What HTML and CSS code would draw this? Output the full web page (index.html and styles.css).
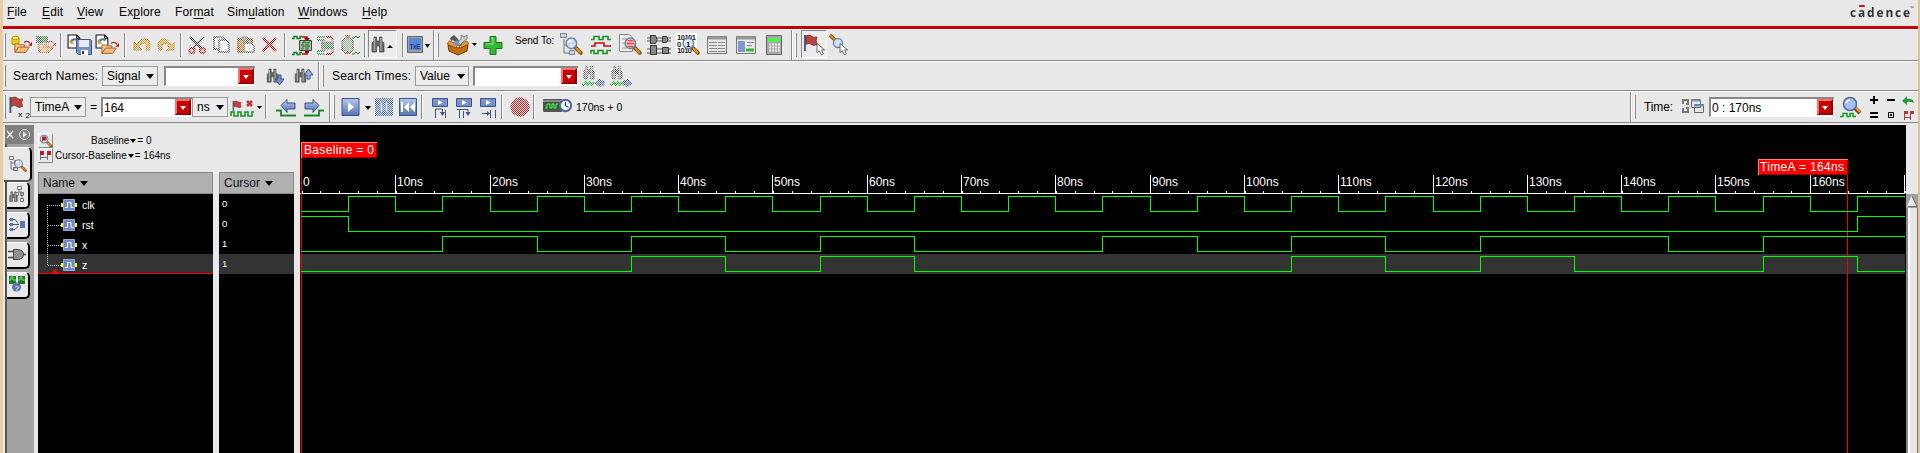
FILE: index.html
```html
<!DOCTYPE html>
<html lang="en">
<head>
<meta charset="utf-8">
<title>Waveform - SimVision</title>
<link rel="stylesheet" href="styles.css">
</head>
<body>
<svg class="defs" width="0" height="0" aria-hidden="true">
  <defs>
    <pattern id="chk" width="2" height="2" patternUnits="userSpaceOnUse"><path d="M0 0h1v1h-1zM1 1h1v1h-1z" fill="#fff"/></pattern>
    <mask id="dis" maskUnits="userSpaceOnUse" x="0" y="0" width="1920" height="130"><rect width="1920" height="130" fill="url(#chk)"/></mask>
    <linearGradient id="blue" x2="0" y2="1"><stop stop-color="#b4c6ea"/><stop offset="1" stop-color="#5874b4"/></linearGradient>
    <linearGradient id="metal"><stop stop-color="#444"/><stop offset=".4" stop-color="#aaa"/><stop offset="1" stop-color="#333"/></linearGradient>
  </defs>
  <symbol id="folder" viewBox="0 0 20 14" overflow="visible">
    <path d="M1 12V3h4l1 1h6v3" fill="#f6c897" stroke="#a85a18"/><path d="M1 12.5L5 6.5H17L13 12.5Z" fill="#f7b878" stroke="#a85a18"/>
    <path d="M11 1.5q4-3 7 1" fill="none" stroke="#b03030" stroke-width="1.4"/><path d="M20 1v4h-4z" fill="#a01818"/>
  </symbol>
  <symbol id="page" viewBox="0 0 14 14" overflow="visible">
    <path d="M1 1h8l3 3v9h-11z" fill="#fff" stroke="#111"/><path d="M9 1v3h3" fill="none" stroke="#111"/><path d="M3 8q3-5 7-2" fill="none" stroke="#5876a8" stroke-width="2"/><path d="M3 5v4h4z" fill="#d0a020"/>
  </symbol>
  <symbol id="bino" viewBox="0 0 14 16" overflow="visible">
    <path d="M3 0h2.500v4h3V0h2.500v4l2 2v9H8.500V9h-3v6H1V6l2-2z" fill="#666" stroke="#444" stroke-width=".7"/><path d="M3.500 1v13M10 1v13" stroke="#aaa" stroke-width="1.300" fill="none"/>
  </symbol>
  <symbol id="lens" viewBox="0 0 17 17" overflow="visible">
    <path d="M10 10l5 5" stroke="#7a4a08" stroke-width="3.600" stroke-linecap="round"/><path d="M10.500 10.500l4.500 4.500" stroke="#e09a28" stroke-width="2"/>
    <circle cx="6" cy="6" r="5" fill="#d6e2f4" fill-opacity=".8" stroke="#7088a8" stroke-width="1.400"/><path d="M3 5q1-2 3-2" stroke="#fff" fill="none" stroke-width="1.500"/>
  </symbol>
  <symbol id="flag" viewBox="0 0 16 18" overflow="visible">
    <path d="M1 0v17" stroke="#42588c" stroke-width="2"/><path d="M2 1q4-2 6 0t6 1l-1 4 1 4q-4 2-6 0t-6 0z" fill="#b84440" stroke="#802020" stroke-width=".7"/>
  </symbol>
  <symbol id="arrow" viewBox="0 0 10 12" overflow="visible"><path d="M0 0v10l2.500-2 2.500 4.500 2-1-2-4.500h3.500z" fill="#fff" stroke="#333" stroke-width=".8"/></symbol>
  <symbol id="step" viewBox="0 0 16 9" overflow="visible"><path d="M.5.5h15v8h-15z" fill="#7890cc" stroke="#3c5488"/><path d="M6 2l5 2.500-5 2.500z" fill="#fff"/></symbol>
  <symbol id="node" viewBox="0 0 16 12" overflow="visible"><path d="M0 4h16v4h-16z" fill="#ff0"/><path d="M2.500.5h11v11h-11z" fill="#7088c4" stroke="#98acd8"/><path d="M4 8.500h2.500v-5h3.500v5h2.500" fill="none" stroke="#fff"/></symbol>
  <symbol id="chip" viewBox="0 0 24 20" overflow="visible"><g stroke="#555" fill="none"><path d="M0 3h24M0 6h24M0 14h24M0 18h24"/><g fill="#888" stroke="#333"><path d="M3.500.5h5q3 4 0 8h-5zM15.500 1.500h4q3 3 0 6h-4zM3.500 10.500h6v9h-6zM15.500 12.500h6v6h-6z"/></g></g></symbol>
</svg>

<div class="window">
  <header class="menubar">
    <nav class="menu">
      <span class="file"><u>F</u>ile</span><span class="edit"><u>E</u>dit</span><span class="view"><u>V</u>iew</span><span class="explore">Ex<u>p</u>lore</span><span class="format">For<u>m</u>at</span><span class="sim">Sim<u>u</u>lation</span><span class="windows"><u>W</u>indows</span><span class="help"><u>H</u>elp</span>
    </nav>
    <div class="brand">c<span class="macron">a</span>dence<sup>™</sup></div>
  </header>

  <section class="bar bar-main">
    <i class="grip"></i>
    <svg width="52" height="31" viewBox="8 29 52 31">
      <path d="M12 38v6q4 2 7 0v-6" fill="#f2d010" stroke="#b09000"/><ellipse cx="15.500" cy="38" rx="3.500" ry="1.700" fill="#ffef50" stroke="#b09000"/>
      <use href="#folder" x="14" y="41" width="18" height="13"/>
      <g mask="url(#dis)"><path d="M36 36h12v7h-12z" fill="#487848"/><path d="M37 39h10" stroke="#28b030"/><use href="#folder" x="38" y="41" width="18" height="13"/></g>
    </svg>
    <i class="sep"></i>
    <svg width="62" height="31" viewBox="62 29 62 31">
      <use href="#page" x="67" y="34" width="15" height="15"/><path d="M76.500 39.500h14l1 1v14h-13l-2-2z" fill="#7890c8" stroke="#3c5488"/><path d="M79 40h10v7h-10z" fill="#e8eef8"/><path d="M81 50h7v5h-7z" fill="#fff"/><path d="M82 51h2v3h-2z" fill="#334"/>
      <use href="#page" x="95" y="34" width="15" height="15"/><use href="#folder" x="101" y="42" width="18" height="13"/>
    </svg>
    <i class="sep"></i>
    <svg width="54" height="31" viewBox="126 29 54 31"><g mask="url(#dis)" fill="#f0a010" stroke="#a86000">
      <path d="M134 42v8h8l-3-3q2-5 5-4 3 1 2 7h3q3-9-3-11-6-1-9 6z"/><path d="M174 42v8h-8l3-3q-2-5-5-4-3 1-2 7h-3q-3-9 3-11 6-1 9 6z"/></g></svg>
    <i class="sep"></i>
    <svg width="102" height="31" viewBox="182 29 102 31"><g mask="url(#dis)" fill="none">
      <path d="M190 37l12 12M204 37l-12 12" stroke="#222" stroke-width="2"/><circle cx="192" cy="50.500" r="2.600" stroke="#d00" stroke-width="2"/><circle cx="202.500" cy="50.500" r="2.600" stroke="#d00" stroke-width="2"/>
      <g stroke="#444" fill="#fff" stroke-width="1.500"><path d="M214 37h8l3 3v9h-11z"/><path d="M219 40h7l3 3v9h-10z"/></g>
      <path d="M238 39h14v13h-14z" fill="#d88018" stroke="#804000" stroke-width="1.500"/><path d="M242 37h6v4h-6z" fill="#888" stroke="#555"/><path d="M244 43h7l3 3v6h-10z" fill="#fff" stroke="#555" stroke-width="1.500"/>
      <path d="M263 38l13 13M276 38l-13 13" stroke="#b81010" stroke-width="3.500"/></g></svg>
    <i class="sep"></i>
    <svg width="78" height="31" viewBox="286 29 78 31" fill="none">
      <path d="M292 38.500h2v-2h3v2h3v-2h2" stroke="#107818" stroke-width="1.300"/><path d="M292 54.500h2v-2h3v2h3v-2h2" stroke="#107818" stroke-width="1.300"/>
      <path d="M302 37h5v2M302 54h5v-3" stroke="#b00000" stroke-width="1.500"/><path d="M304 38h6l-3 4zM305 49h4v4h-4z" fill="#b00000"/>
      <path d="M299.500 40.500h12v10h-12z" fill="#b0b8b0" stroke="#444"/><path d="M301 45h2v-3h3v3h2v-3h2M301 49h2v-3h3v3h2v-3h2" stroke="#108018"/>
      <g mask="url(#dis)"><path d="M317 37h8M317 40h8M317 51h8M317 54h8" stroke="#107818" stroke-width="1.500"/><path d="M321 41.500h13v8h-13z" fill="#666"/><path d="M323 44h9v3h-9z" fill="#20a028"/><path d="M326 37h5l2 3M326 54h5l2-3" stroke="#b00000" stroke-width="2"/>
      <path d="M342 40l3-2h5l3 2v11l-3 2h-6l-2-2z" fill="#90b090" stroke="#444"/><path d="M345 35h5l-2.500 3zM345 54h5l-2.500-3z" fill="#d00000"/></g>
      <path d="M352 38h2l2-2 2 2 2-2M352 54h2l2-2 2 2 2-2" stroke="#107818"/>
    </svg>
    <i class="sep"></i>
    <div class="toggle find"><svg width="27" height="26" viewBox="369 31 27 26"><use href="#bino" x="371" y="37" width="14" height="16"/><path d="M387 48l3-3 3 3z"/></svg></div>
    <i class="sep after-find"></i>
    <svg width="29" height="31" viewBox="404 29 29 31"><path d="M407.500 36.500h15v16h-15z" fill="#a0a0a0" stroke="#666"/><path d="M409 38h12v12h-12z" fill="#5888dc"/><text x="409.500" y="49" font-size="6.500" textLength="11" fill="#102040">TxE</text><path d="M425 44h5l-2.500 4z"/></svg>
    <i class="edge"></i><i class="grip"></i>
    <svg width="69" height="31" viewBox="442 29 69 31">
      <path d="M448 45l10 3 10-3-1 6-9 4-9-4z" fill="#c06c10" stroke="#713d06"/><path d="M447 44l2-3 9 3-2 4zM458 44l9-3 2 3-9 4z" fill="#e09838" stroke="#8a4a08" stroke-width=".7"/><path d="M450 38l4-3 3 3 5 7-2 1-7-6-2 1z" fill="#555"/><path d="M455 44l6-5v-4l3 2 3-2v4l-3 2-4 4z" fill="#ccc" stroke="#666" stroke-width=".7"/><path d="M453 43l4-3 3 4-3 2z" fill="#7890c8"/>
      <path d="M472 43h5l-2.500 3z"/><path d="M490 36.500h6v6h6v6h-6v6h-6v-6h-6v-6h6z" fill="#38b838" stroke="#157815"/><path d="M491 38h2v6h-7" stroke="#98e898" fill="none"/>
    </svg>
    <span class="send">Send To:</span>
    <svg width="236" height="31" viewBox="555 29 236 31" fill="none">
      <path d="M564 39v14h6M564 45h6" stroke="#777"/><path d="M560.500 33.500h6v4h-6zM568.500 38.500h6v5h-6zM569.500 50.500h5v4h-5z" fill="#ccd4e0" stroke="#70809c"/><use href="#lens" x="565" y="37" width="18" height="18"/>
      <path d="M591 39.500h3v-3h5v3h4v-3h5v3h3M591 53.500v-3h3v3h4v-3h5v3h4v-3h4" stroke="#1a9020" stroke-width="1.600"/><path d="M591 46h4v-3h9v3h7" stroke="#c01010" stroke-width="1.600"/>
      <path d="M619.500 34.500h10l3 3v14h-13z" fill="#eee" stroke="#888"/><path d="M622 39h7M622 43h4M622 48h5" stroke="#999"/><use href="#lens" x="624" y="37" width="18" height="18"/><circle cx="630.500" cy="43.500" r="4" fill="#e04848"/><path d="M627 42h7M627 45h7" stroke="#fff"/>
      <use href="#chip" x="647" y="35" width="24" height="20"/>
      <path d="M676 33h21v20h-21z" fill="#fff"/><g class="bits"><text x="677" y="40" textLength="19">10101</text><text x="677" y="46.500">0</text><text x="677" y="53" textLength="15">1010</text></g><use href="#lens" x="682" y="37" width="18" height="18"/><text x="686" y="47" font-size="8" font-weight="bold" fill="#111">1</text>
      <g fill="#e8e8e8" stroke="#777"><path d="M707.500 36.500h19v17h-19z"/><path d="M736.500 36.500h19v17h-19z"/></g><path d="M708 38h18M737 38h18" stroke="#999" stroke-width="3"/><path d="M709 42.500h8M718 42.500h7M709 45.500h8M718 45.500h7M709 48.500h8M718 48.500h7M709 51.500h8M718 51.500h7" stroke="#888"/><path d="M738 41h7v11h-7z" fill="#8098d0"/><path d="M747 42.500h7M747 45.500h5" stroke="#888"/><path d="M746 48.500h8v3h-8z" fill="#38b830"/>
      <path d="M766.500 35.500h15v19h-15z" fill="#a8a8a8" stroke="#666"/><path d="M768 38h12v4h-12z" fill="#50f050"/><path d="M769 44.500h11M769 47.500h11M769 50.500h11" stroke="#eee" stroke-width="2" stroke-dasharray="2 1"/>
    </svg>
    <i class="edge"></i><i class="grip"></i>
    <div class="toggle pick"><svg width="24" height="26" viewBox="802 31 24 26"><use href="#flag" x="804" y="35" width="15" height="17"/><use href="#arrow" x="817" y="43" width="9" height="12"/></svg></div>
    <svg width="24" height="31" viewBox="827 29 24 31"><path d="M830 35l6 6" stroke="#7a4a08" stroke-width="3.500"/><path d="M830 35l6 6" stroke="#d88a18" stroke-width="2"/><circle cx="838" cy="43" r="4.500" fill="#d6e2f4" stroke="#7088a8" stroke-width="1.400"/><use href="#arrow" x="840" y="43" width="9" height="12"/></svg>
  </section>

  <section class="bar bar-search">
    <i class="grip"></i>
    <label class="names">Search Names:</label>
    <div class="select signal">Signal<b class="caret"></b></div>
    <div class="field f-names"><input aria-label="Search names"><button aria-label="List"></button></div>
    <svg width="63" height="28" viewBox="255 62 63 28"><use href="#bino" x="266" y="69" width="13" height="14"/><path d="M278 75h3v4h3l-4.500 6-4.500-6h3z" fill="#7890cc" stroke="#3c5488"/><use href="#bino" x="294" y="69" width="13" height="14"/><path d="M307 79v-4h-3l4.500-6 4.500 6h-3v4z" fill="#98b0e0" stroke="#3c5488"/></svg>
    <i class="edge"></i><i class="grip"></i>
    <label class="times">Search Times:</label>
    <div class="select value">Value<b class="caret"></b></div>
    <div class="field f-times"><input aria-label="Search times"><button aria-label="List"></button></div>
    <svg width="60" height="28" viewBox="578 62 60 28"><g mask="url(#dis)" fill="none"><use href="#bino" x="583" y="66" width="12" height="14"/><use href="#bino" x="611" y="66" width="12" height="14"/><path d="M582 85h2l2-3 2 3 2-3 2 3 2-3M610 85h2l2-3 2 3 2-3 2 3 2-3" stroke="#00a010" stroke-width="2"/><path d="M595 83l5-4v2h4v4h-4v2zM632 83l-5-4v2h-4v4h4v2z" fill="#4868b8" stroke="#385090"/></g></svg>
  </section>

  <section class="bar bar-time">
    <i class="grip"></i>
    <svg width="22" height="30" viewBox="8 92 22 30"><use href="#flag" x="9" y="97" width="16" height="17"/><text x="18" y="117" font-size="8" font-weight="bold" fill="#345">x</text><text x="25.500" y="118" font-size="8">2</text></svg>
    <div class="select timea">TimeA<b class="caret"></b></div>
    <span class="eq">=</span>
    <div class="field f-time"><input aria-label="Cursor time" value="164"><button aria-label="List"></button></div>
    <div class="select unit">ns<b class="caret"></b></div>
    <svg width="37" height="30" viewBox="228 92 37 30"><use href="#flag" x="232" y="101" width="11" height="11"/><path d="M247 101l5 5M252 101l-5 5" stroke="#c03838" stroke-width="2.500"/><path d="M231 116v-4h3v4h4v-4h3v4h4v-4h3v4h4v-4h2" fill="none" stroke="#189828" stroke-width="1.600"/><path d="M257 106h5l-2.500 3z"/></svg>
    <i class="sep"></i>
    <svg width="62" height="30" viewBox="267 92 62 30"><path d="M276 110.500h5v5h15M304 115.500h15v-5h5" fill="none" stroke="#188828" stroke-width="1.800"/><path d="M281 105.500l6-6v3.500h8v6h-8v3.500zM319 105.500l-6-6v3.500h-8v6h8v3.500z" fill="url(#blue)" stroke="#3c5488"/></svg>
    <i class="edge"></i><i class="grip"></i>
    <svg width="83" height="30" viewBox="338 92 83 30"><path d="M342 98.500h17v17h-17z" fill="url(#blue)" stroke="#3c5488"/><path d="M348 102l6 5-6 5z" fill="#fff"/><path d="M365 106h6l-3 4z"/><g mask="url(#dis)"><path d="M375 98h18v18h-18z" fill="#5070b0"/></g><path d="M380.500 102v10h2v-10zM385.500 102v10h2v-10z" fill="#e4eaf6" stroke="#92a6d2" stroke-width=".6"/><path d="M399.500 98.500h17v17h-17z" fill="url(#blue)" stroke="#3c5488"/><path d="M401 102h2v10h-2zM409 102v10l-5-5zM415 102v10l-5-5z" fill="#fff"/></svg>
    <i class="sep"></i>
    <svg width="78" height="30" viewBox="423 92 78 30" fill="none" stroke="#3c5488"><g stroke="none"><use href="#step" x="432" y="98" width="16" height="9"/><use href="#step" x="456" y="98" width="16" height="9"/><use href="#step" x="480" y="98" width="16" height="9"/></g><path d="M435.500 118v-9h7v5M445.500 110v8M459.500 118v-9M463.500 118v-7M457 109.500h11v4M482 113.500h7M490.500 110v8M495.500 110v8"/><path d="M440 112h5l-2.500 4zM465.500 112h5l-2.500 4zM487 111v5l3-2.500z" fill="#3c5488" stroke="none"/></svg>
    <i class="sep"></i>
    <svg width="30" height="30" viewBox="503 92 30 30"><g mask="url(#dis)"><circle cx="520" cy="107" r="9.200" fill="#d02020" stroke="#802020"/></g></svg>
    <i class="sep"></i>
    <svg width="40" height="30" viewBox="535 92 40 30"><path d="M543.500 99.500h18v12h-18z" fill="#485848" stroke="#555"/><path d="M543 100h19v2h-19z" fill="#888"/><path d="M545 108h2v-4h3v4h2v-4h2v4h2v-4h2" fill="none" stroke="#40ff40"/><circle cx="565.500" cy="105.500" r="5.700" fill="#eef2fa" stroke="#506898" stroke-width="2"/><path d="M565.500 102v4l3 1" fill="none" stroke="#334"/></svg>
    <span class="status">170ns + 0</span>
    <i class="edge"></i><i class="grip"></i>
    <label class="time">Time:</label>
    <svg width="33" height="30" viewBox="1676 92 33 30" fill="none"><path d="M1683 104v-4h5v4h-2M1683 108v4h5v-4h-2" stroke="#777" stroke-width="2"/><path d="M1691.500 99.500h9v8h-9zM1694.500 104.500h9v8h-9z" fill="#e8e8e8" stroke="#666"/><path d="M1691 100.500h10M1694 105.500h10" stroke="#7890b8" stroke-width="2"/></svg>
    <div class="field f-range"><input aria-label="Time range" value="0 : 170ns"><button aria-label="List"></button></div>
    <svg width="84" height="30" viewBox="1834 92 84 30" fill="none"><path d="M1854 107l6 6" stroke="#7a4a08" stroke-width="4"/><path d="M1855 107l5 5" stroke="#e0a030" stroke-width="2"/><circle cx="1850" cy="104" r="6.500" fill="#a8c0f0" stroke="#4c68a0" stroke-width="1.500"/><path d="M1846 103q1-3 4-3" stroke="#fff" stroke-width="1.500"/><path d="M1840 116.500h3v-3h4v3h3v-3h3v3h3" stroke="#189828" stroke-width="1.500"/>
      <path d="M1870 100h8M1874 96v8M1887 100h8M1870 113h8M1870 117h8" stroke="#000" stroke-width="2"/><path d="M1888.500 112.500h5v5h-5z" stroke="#000"/><path d="M1890 114h2v2h-2z" fill="#000"/><path d="M1902 101l5-5v3q6-1 7 4-4-2-7-1v3z" fill="#289838"/><path d="M1904.500 120v-9M1904 117.500h7M1910.500 120v-9" stroke="#b03840"/><path d="M1904 111h4v3h-4zM1910 111h4v3h-4z" fill="#b83840"/></svg>
  </section>

  <main class="content">
    <aside class="rail">
      <svg class="rail-head" width="29" height="19" viewBox="5 125 29 19" fill="none"><path d="M7 131l6 7M13 131l-6 7" stroke="#eee" stroke-width="1.300"/><circle cx="24.500" cy="134.500" r="5" stroke="#eee"/><path d="M23 131.500l4 3-4 3z" fill="#eee"/></svg>
      <div class="tab active"><svg width="24" height="32" viewBox="7 148 24 32" fill="none"><path d="M11 161v8h4M11 163h4" stroke="#777"/><path d="M9.500 156.500h4v3h-4zM14.500 160.500h5v4h-5zM13.500 167.500h4v3h-4z" stroke="#777"/><use href="#lens" x="14" y="159" width="13" height="13"/></svg></div>
      <div class="tab"><svg width="22" height="24" viewBox="7 183 22 24" fill="none"><path d="M17.500 186.500h4v3h-4zM15.500 192.500h3v3h-3zM20.500 192.500h3v3h-3zM20.500 198.500h3v3h-3z" stroke="#777"/><path d="M19 190v2h3v7" stroke="#777"/><use href="#bino" x="9" y="191" width="9" height="12"/></svg></div>
      <div class="tab"><svg width="22" height="24" viewBox="7 212 22 24" fill="none"><path d="M9 218.500h6l3 4M9 223.500h10M9 228.500h6l3-3" stroke="#3c5488"/><path d="M10 217h3v3h-3zM10 222h3v3h-3zM10 227h3v3h-3zM20 220h5v7h-5z" fill="#5874b4"/></svg></div>
      <div class="tab"><svg width="22" height="24" viewBox="7 242 22 24" fill="none"><path d="M8 250.500h6M8 256.500h6M22 253.500h4" stroke="#444" stroke-width="1.500"/><path d="M13.500 248.500h5q5 1 5 5t-5 5h-5z" fill="#909090" stroke="#444"/></svg></div>
      <div class="tab"><svg width="22" height="24" viewBox="7 272 22 24" fill="none"><path d="M9 275h7v8h-7zM18 275h7v8h-7z" fill="#287030"/><path d="M9 279h2v-3h2v3h3M18 279h2v-3h2v3h3" stroke="#50ff50"/><circle cx="16.500" cy="286" r="4.500" fill="#5874b4"/><text x="14.500" y="289.500" font-size="8" fill="#fff">?</text></svg></div>
    </aside>

    <section class="signals">
      <div class="baseinfo">
        <div class="info-row"><svg width="15" height="15" viewBox="0 0 15 15"><path d="M.5 14.500v-14h14" fill="none" stroke="#fff"/><path d="M14.500.5v14h-14" fill="none" stroke="#888"/><use href="#lens" x="1.500" y="1.500" width="13" height="13"/><path d="M4.500 3.500v5M5 4h3v3h-3z" stroke="#b02020" fill="#b02020"/></svg><span class="info-a">Baseline<b class="caret sm"></b>= 0</span></div>
        <div class="info-row"><svg width="15" height="15" viewBox="0 0 15 15"><path d="M.5 14.500v-14h14" fill="none" stroke="#fff"/><path d="M14.500.5v14h-14" fill="none" stroke="#888"/><path d="M2.500 12v-9M9.500 12v-9M2 9.500h8" stroke="#777"/><path d="M2 3h4v4h-4zM9 3h4v4h-4z" fill="#b02020"/></svg><span class="info-b">Cursor-Baseline<b class="caret sm"></b>= 164ns</span></div>
      </div>
      <div class="columns">
        <div class="col names-col">
          <div class="col-head">Name<b class="caret"></b></div>
          <div class="row"><svg width="40" height="20" viewBox="0 0 40 20"><path d="M9.500 20v-8.500h14" class="tree"/><use href="#node" x="23" y="5" width="16" height="12"/></svg>clk</div>
          <div class="row"><svg width="40" height="20" viewBox="0 0 40 20"><path d="M9.500 0v20M9.500 11.500h14" class="tree"/><use href="#node" x="23" y="5" width="16" height="12"/></svg>rst</div>
          <div class="row"><svg width="40" height="20" viewBox="0 0 40 20"><path d="M9.500 0v20M9.500 11.500h14" class="tree"/><use href="#node" x="23" y="5" width="16" height="12"/></svg>x</div>
          <div class="row selected insert"><svg width="40" height="20" viewBox="0 0 40 20"><path d="M9.500 0v11.500h14" class="tree"/><use href="#node" x="23" y="5" width="16" height="12"/><path d="M13 20l4-5 4 5z" fill="red"/></svg>z</div>
        </div>
        <div class="col cursor-col">
          <div class="col-head">Cursor<b class="caret"></b></div>
          <div class="row">0</div><div class="row">0</div><div class="row">1</div><div class="row selected">1</div>
        </div>
      </div>
    </section>

    <svg class="waves" width="1606" height="328" viewBox="0 0 1606 328" fill="none" shape-rendering="crispEdges">
      <path d="M0 129h1605v20h-1605z" fill="#333"/>
      <g stroke="#fff"><path d="M0 68.500h1605"/><path d="M1.500 67h1604" stroke-width="2" stroke-dasharray="1 17.860"/>
      <path d="M95.500 50v18M190.500 50v18M284.500 50v18M378.500 50v18M472.500 50v18M567.500 50v18M661.500 50v18M755.500 50v18M850.500 50v18M944.500 50v18M1038.500 50v18M1133.500 50v18M1227.500 50v18M1321.500 50v18M1415.500 50v18M1510.500 50v18M1604.500 50v18"/></g>
      <g class="axis"><text x="3" y="61">0</text><text x="97" y="61">10ns</text><text x="192" y="61">20ns</text><text x="286" y="61">30ns</text><text x="380" y="61">40ns</text><text x="474" y="61">50ns</text><text x="569" y="61">60ns</text><text x="663" y="61">70ns</text><text x="757" y="61">80ns</text><text x="852" y="61">90ns</text><text x="946" y="61">100ns</text><text x="1040" y="61">110ns</text><text x="1135" y="61">120ns</text><text x="1229" y="61">130ns</text><text x="1323" y="61">140ns</text><text x="1417" y="61">150ns</text><text x="1512" y="61">160ns</text></g>
      <path d="M1.500 17v311M1547.500 49v279" stroke="#f00000"/>
      <g stroke="#0f0">
        <path d="M1 86.500H48.500V71.500H95.500V86.500H142.500V71.500H190.500V86.500H237.500V71.500H284.500V86.500H331.500V71.500H378.500V86.500H425.500V71.500H472.500V86.500H520.500V71.500H567.500V86.500H614.500V71.500H661.500V86.500H708.500V71.500H755.500V86.500H802.500V71.500H850.500V86.500H897.500V71.500H944.500V86.500H991.500V71.500H1038.500V86.500H1085.500V71.500H1133.500V86.500H1180.500V71.500H1227.500V86.500H1274.500V71.500H1321.500V86.500H1368.500V71.500H1415.500V86.500H1463.500V71.500H1510.500V86.500H1557.500V71.500H1605"/>
        <path d="M1 91.500H48.500V106.500H1557.500V91.500H1605"/>
        <path d="M1 126.500H142.500V111.500H237.500V126.500H331.500V111.500H425.500V126.500H520.500V111.500H614.500V126.500H802.500V111.500H897.500V126.500H991.500V111.500H1085.500V126.500H1180.500V111.500H1368.500V126.500H1463.500V111.500H1605"/>
        <path d="M1 146.500H331.500V131.500H425.500V146.500H520.500V131.500H614.500V146.500H991.500V131.500H1085.500V146.500H1180.500V131.500H1274.500V146.500H1463.500V131.500H1557.500V146.500H1605"/>
      </g>
      <g><path d="M1 17h76v16h-76z" fill="red"/><path d="M1.500 33v-15.500h75" stroke="#ff8080"/><path d="M2 32.500h74.500v-15" stroke="#a00000"/><path d="M1458 34h90v16h-90z" fill="red"/><path d="M1458.500 50v-15.500h89" stroke="#ff8080"/><path d="M1459 49.500h88.500v-15" stroke="#a00000"/></g>
      <g class="axis"><text x="4" y="29" textLength="70">Baseline = 0</text><text x="1460" y="46" textLength="84">TimeA = 164ns</text></g>
    </svg>

    <div class="scroll"><svg width="12" height="14" viewBox="0 0 12 14"><path d="M0 0h12v14h-12z" fill="#a0a0a0"/><path d="M6 2l5 10h-9z" fill="#e8e8e8"/><path d="M6 2l-4.500 10.500" stroke="#fff"/><path d="M6 2l5 10.500h-9" fill="none" stroke="#666"/></svg></div>
  </main>
</div>
</body>
</html>
```
FILE: styles.css
```css
* { box-sizing: border-box; }
body { margin: 0; background: #e8e8e8; color: #000; font: 12px/16px "Liberation Sans", Arial, sans-serif; }
.defs { display: block; }
.window { width: 1920px; height: 453px; overflow: hidden; border-left: 3px solid #e9cba4; border-right: 2px solid #e3c193; background: #e8e8e8; }
svg { flex: none; display: block; }
label, span { white-space: nowrap; }

.menubar { display: flex; justify-content: space-between; height: 29px; border-bottom: 3px solid #c80000; }
.menu { display: flex; padding: 4px 0 0 4px; letter-spacing: .15px; }
.menu u { text-underline-offset: 2px; }
.file { width: 35px; }
.edit { width: 35px; }
.view { width: 42px; }
.explore { width: 56px; }
.format { width: 52px; }
.sim { width: 71px; }
.windows { width: 64px; }
.help { width: 40px; }
.brand { width: 68px; padding-top: 4px; font: bold 13px/16px "Open Sans", sans-serif; letter-spacing: 2px; color: #333; white-space: nowrap; transform: scaleX(.92); transform-origin: left; }
.brand sup { font-size: 5px; line-height: 1px; margin-left: -2px; vertical-align: 7px; letter-spacing: 0; }
.macron { background: linear-gradient(#d01020, #d01020) 1px 2px / 6px 2px no-repeat; }

.bar { display: flex; border-top: 1px solid #fff; border-bottom: 1px solid #888; }
.bar-main { height: 32px; }
.bar-search { height: 30px; }
.bar-time { height: 32px; }
.bar-main > svg { margin-top: -1px; }
.grip { flex: none; width: 5px; margin: 3px 0 3px; background: linear-gradient(#fff, #fff) 1px 0 / 1px 100% no-repeat, linear-gradient(#888, #888) 2px 0 / 1px 100% no-repeat; }
.sep { flex: none; width: 2px; margin: 3px 0; background: #888; border-right: 1px solid #fff; }
.edge { flex: none; width: 3px; background: linear-gradient(90deg, #888 1px, #fff 1px 2px, #e8e8e8 2px); }
.toggle { flex: none; height: 28px; margin-top: 0; border: 1px solid; border-color: #888 #fff #fff #888; background: #ececec; }
.find { width: 29px; margin-left: 2px; }
.pick { width: 26px; margin-left: 1px; }
.after-find { margin-left: 5px; }
.edge + .grip { width: 6px; }
.send { width: 40px; margin: 3px 0 0 4px; font-size: 10px; }
.bits { font: bold 7.500px "Liberation Sans", Arial, sans-serif; fill: #222; }

.select { flex: none; display: flex; align-items: center; justify-content: space-between; height: 20px; padding: 0 3px 0 4px; border: 1px solid #999; background: #ececec; }
.caret { flex: none; width: 0; height: 0; border: 4px solid transparent; border-top: 5px solid #000; border-bottom: 0; }
.caret.sm { display: inline-block; margin: 0 1px 1px; border-width: 4px 3.500px 0; }
.field { flex: none; display: flex; height: 20px; padding-right: 1px; border-top: 2px solid #888; border-left: 2px solid #888; border-bottom: 1px solid #fff; background: #fff; }
.field input { flex: 1; min-width: 0; padding: 0 1px; border: 0; background: none; font: inherit; }
.field button { width: 16px; height: 16px; padding: 0; border: 2px solid; border-color: #ff7070 #900 #900 #ff7070; background: #c80000; }
.field button::after { content: ""; display: block; width: 0; margin: 1px auto 0; border: 3.500px solid transparent; border-top: 4px solid #fff; border-bottom: 0; }
.bar-search .select, .bar-search .field { margin-top: 4px; }
.bar-time .select, .bar-time .field { margin-top: 5px; }
.names { width: 89px; margin: 6px 0 0 5px; letter-spacing: .2px; }
.signal { width: 56px; }
.f-names { width: 91px; margin-left: 6px; }
.times { width: 83px; margin: 6px 0 0 5px; letter-spacing: .2px; }
.value { width: 54px; }
.f-times { width: 105px; margin-left: 4px; }
.timea { width: 56px; }
.eq { width: 15px; padding: 7px 0 0 4px; }
.f-time { width: 91px; }
.unit { width: 36px; }
.status { flex: 1; padding: 7px 0 0 1px; font-size: 10.500px; }
.time { width: 32px; margin: 7px 0 0 5px; letter-spacing: -.1px; }
.f-range { width: 125px; }

.content { display: flex; height: 328px; margin-top: 2px; padding-left: 2px; }
.rail { flex: none; width: 29px; background: #a3a3a3; border-left: 2px solid #555; }
.rail-head { margin-left: -2px; background: #808080; }
.tab { width: 23px; height: 27px; margin-bottom: 3px; overflow: hidden; background: #e8e8e8; border: solid #000; border-width: 1px 2px 2px 0; border-top-color: #fff; border-radius: 0 5px 5px 0; }
.tab.active { width: 28px; height: 35px; margin: 3px 0 0 -3px; padding-left: 3px; border-color: #fff #000 #555 #fff; }
.signals { flex: none; width: 266px; padding-left: 4px; }
.baseinfo { height: 47px; padding-top: 8px; }
.info-row { display: flex; height: 15px; font-size: 10px; line-height: 15px; }
.info-a { padding-left: 38px; }
.info-b { padding-left: 2px; }
.columns { display: flex; gap: 6px; height: 281px; }
.col { background: #000; color: #fff; }
.names-col { width: 175px; }
.cursor-col { width: 75px; }
.col-head { display: flex; align-items: center; gap: 5px; height: 22px; padding-left: 4px; border: 1px solid #888; background: #b0b0b0; color: #111; }
.row { display: flex; height: 20px; font-size: 10.500px; line-height: 22px; gap: 4px; }
.cursor-col .row { padding-left: 3px; font-size: 9.500px; line-height: 20px; }
.selected { background: #333; }
.insert { box-shadow: inset 0 -1px red; }
.tree { fill: none; stroke: #ccc; stroke-dasharray: 1 1; shape-rendering: crispEdges; }
.waves { background: #000; }
.axis { fill: #fff; font-size: 12px; }
.scroll { flex: 1; height: 259px; margin-top: 69px; background: linear-gradient(90deg, #888 2px, #fff 2px 4px, #e8e8e8 4px 11px, #777 11px); }
```
